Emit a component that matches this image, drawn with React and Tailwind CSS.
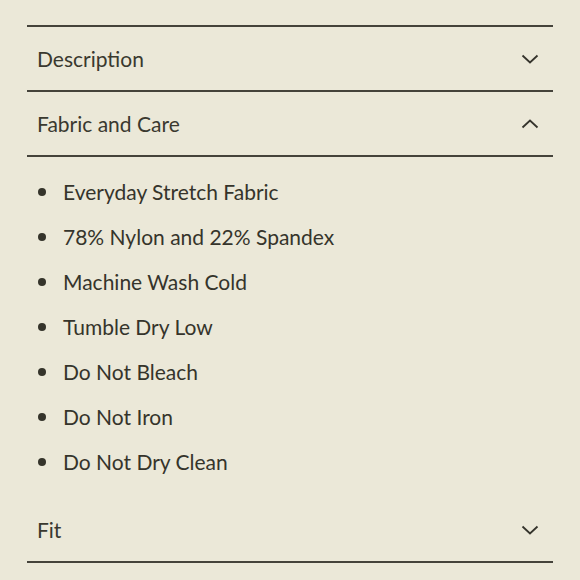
import React, { useState } from "react";

const care = [
  "Everyday Stretch Fabric",
  "78% Nylon and 22% Spandex",
  "Machine Wash Cold",
  "Tumble Dry Low",
  "Do Not Bleach",
  "Do Not Iron",
  "Do Not Dry Clean",
];

const Chevron = ({ up }) => (
  <svg width="18" height="10" viewBox="0 0 18 10" fill="none" className="mr-[14px]">
    <path
      d={up ? "M1.5 8.5 L9 1.5 L16.5 8.5" : "M1.5 1.5 L9 8.5 L16.5 1.5"}
      stroke="#35342c"
      strokeWidth="1.8"
    />
  </svg>
);

const Row = ({ title, open, onClick }) => (
  <button
    onClick={onClick}
    className="w-full h-[63px] flex items-center justify-between pl-[10px] text-left text-[21px] text-[#3a392f] cursor-pointer"
  >
    <span>{title}</span>
    <Chevron up={open} />
  </button>
);

const App = () => {
  const [open, setOpen] = useState("fabric");
  const toggle = (k) => setOpen(open === k ? null : k);

  return (
    <div
      className="w-[580px] h-[580px] bg-[#ebe8d8] pt-[25px] px-[27px]"
      style={{ fontFamily: "Lato, 'Open Sans', sans-serif" }}
    >
      <div className="border-t-2 border-[#45433a]">
        {/* description */}
        <div className="border-b-2 border-[#45433a]">
          <Row title="Description" open={open === "desc"} onClick={() => toggle("desc")} />
        </div>
        {/* fabric and care */}
        <div className="border-b-2 border-[#45433a]">
          <Row title="Fabric and Care" open={open === "fabric"} onClick={() => toggle("fabric")} />
        </div>
        {open === "fabric" && (
          <ul className="pt-[12px] pb-[14px]">
            {care.map((c) => (
              <li key={c} className="h-[45px] flex items-center text-[21px] text-[#35342b]">
                <span className="w-[8px] h-[8px] rounded-full bg-[#35342b] ml-[11px] mr-[17px]" />
                {c}
              </li>
            ))}
          </ul>
        )}
        {/* fit */}
        <div className="border-b-2 border-[#45433a]">
          <Row title="Fit" open={open === "fit"} onClick={() => toggle("fit")} />
        </div>
      </div>
    </div>
  );
};

export default App;
